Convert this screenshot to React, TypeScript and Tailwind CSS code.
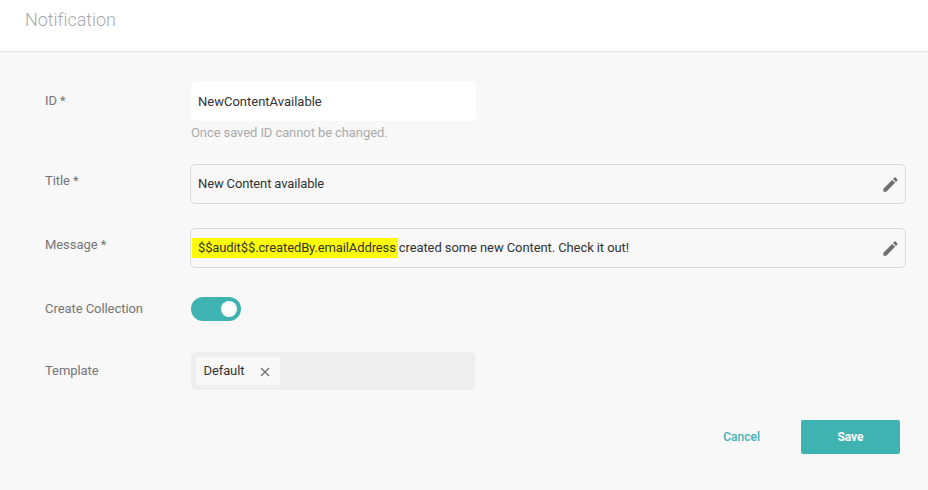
export default function App() {
  const pencil = (
    <svg width="19" height="19" viewBox="0 0 24 24" className="mr-[1.5px] shrink-0" fill="#6f6f6f">
      <path d="M3 17.25V21h3.75L17.81 9.94l-3.75-3.75L3 17.25zM20.71 7.04a1 1 0 0 0 0-1.41l-2.34-2.34a1 1 0 0 0-1.41 0l-1.83 1.83 3.75 3.75 1.83-1.83z" />
    </svg>
  );
  const labelCls = "w-[146px] shrink-0 text-[13px] leading-[16px] tracking-[-0.06px] text-[#757575]";
  const boxCls = "flex h-10 w-[716px] -ml-px items-center justify-between rounded-[5px] border border-[#d9d9d9] pl-[7px] pr-[4px] text-[13px] text-[#333333]";
  return (
    <div className="h-[490px] w-[928px] overflow-hidden bg-[#f8f8f8] font-['Roboto',sans-serif]">
      <header className="h-[52px] border-b border-[#e6e6e6] bg-white pl-[25px] pt-[9px]">
        <h1 className="text-[18px] font-light leading-[22px] tracking-[-0.05px] text-[#a9a9a9]">Notification</h1>
      </header>
      <main className="pl-[45px] pt-[29px]">
        <div className="flex">
          <label className={labelCls + " pt-[12px]"}>ID *</label>
          <div>
            <div className="flex h-10 w-[285px] items-center rounded-[5px] bg-white pl-[7px] pt-[1px] text-[13px] text-[#333333]">NewContentAvailable</div>
            <p className="mt-[4px] text-[13px] leading-[15px] tracking-[-0.09px] text-[#ababab]">Once saved ID cannot be changed.</p>
          </div>
        </div>
        <div className="mt-[24px] flex">
          <label className={labelCls + " pt-[9px]"}>Title *</label>
          <div className={boxCls}>
            <span className="tracking-[-0.14px]">New Content available</span>
            {pencil}
          </div>
        </div>
        <div className="mt-[24px] flex">
          <label className={labelCls + " pt-[9px]"}>Message *</label>
          <div className={boxCls}>
            <span className="flex items-center tracking-[-0.12px]">
              <span className="-ml-[6px] flex h-5 items-center bg-[#ffff00] pl-[6px] pr-[2px]">$$audit$$.createdBy.emailAddress</span>
              <span className="ml-[1px] tracking-[-0.09px]">created some new Content. Check it out!</span>
            </span>
            {pencil}
          </div>
        </div>
        <div className="mt-[29px] flex items-center">
          <label className={labelCls}>Create Collection</label>
          <div className="flex h-6 w-[50px] items-center justify-end rounded-full bg-[#3fb3b1] pr-[4px]">
            <div className="h-4 w-4 rounded-full bg-white" />
          </div>
        </div>
        <div className="mt-[31px] flex items-center">
          <label className={labelCls}>Template</label>
          <div className="flex h-[38px] w-[284px] items-center rounded-[5px] bg-[#eeeeee] pl-[5px]">
            <div className="flex h-7 w-[84px] items-center bg-[#f8f8f8] pl-[7.5px] text-[13px] text-[#333333]">
              <span className="tracking-[-0.1px]">Default</span>
              <svg width="10" height="10" viewBox="0 0 10 10" className="ml-[16px] mt-[2px]" stroke="#666666" strokeWidth="1.1" fill="none">
                <path d="M1 1l8 8M9 1l-8 8" />
              </svg>
            </div>
          </div>
        </div>
        <div className="mt-[30px] flex items-center justify-end pr-[28px]">
          <button className="mr-[41px] text-[12px] font-medium text-[#3fb3b1]">Cancel</button>
          <button className="h-[34px] w-[99px] rounded-[2px] bg-[#3fb3b1] text-[12px] font-bold text-white">Save</button>
        </div>
      </main>
    </div>
  );
}
